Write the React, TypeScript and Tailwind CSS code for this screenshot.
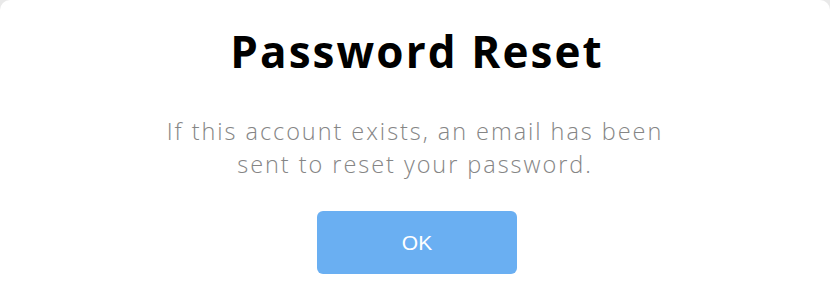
export default function App() {
  return (
    <div className="h-[290px] w-[830px] overflow-hidden bg-[#e9e9e9]">
      <div className="flex h-[300px] flex-col items-center rounded-[10px] bg-white pt-[21px] font-['Open_Sans',sans-serif]">
        <h1 className="ml-[4px] text-[44px] font-bold leading-[60px] tracking-[2.1px] text-black">Password Reset</h1>
        <p className="mt-[34px] text-center text-[23.5px] font-light leading-[33px] tracking-[1.95px] text-[#858585]">
          If this account exists, an email has been
          <br />
          sent to reset your password.
        </p>
        <button className="ml-[4px] mt-[30px] h-[63px] w-[200px] rounded-[6px] bg-[#6aaff2] font-['Liberation_Sans',sans-serif] text-[21px] text-white">
          OK
        </button>
      </div>
    </div>
  );
}
